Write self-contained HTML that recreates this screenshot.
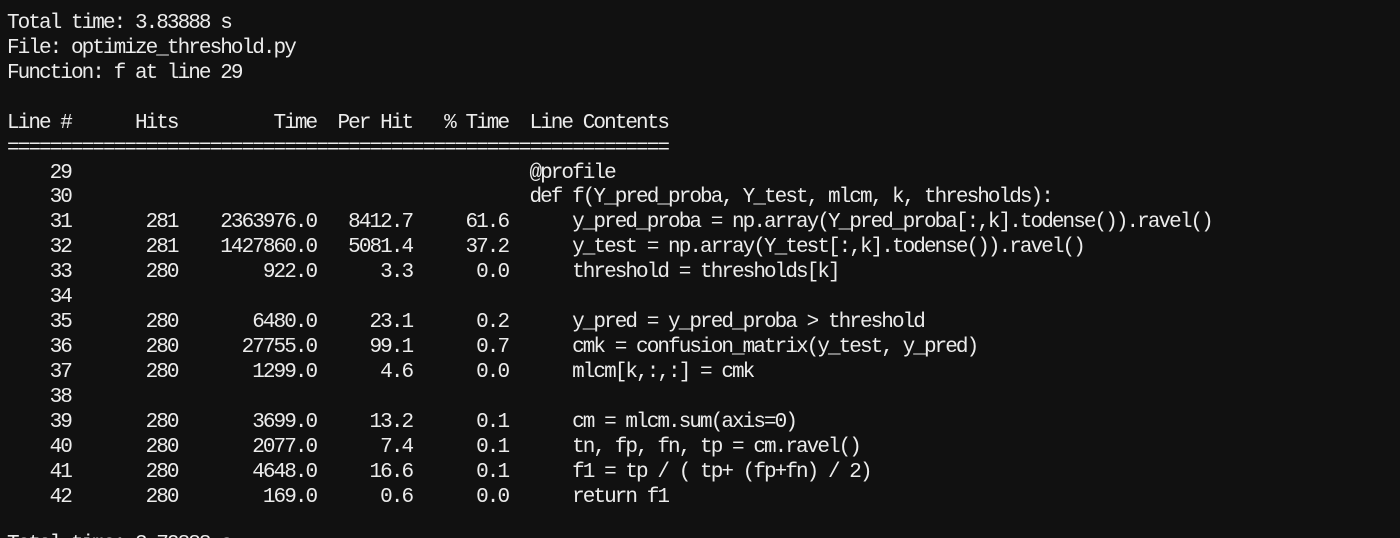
<!DOCTYPE html>
<html><head><meta charset="utf-8"><style>
html,body{margin:0;padding:0;background:#111111}
#wrap{position:relative;width:1400px;height:538px;overflow:hidden;background:#111111}
pre{margin:0;position:absolute;left:7px;top:12px;color:#ececec;font-family:"Liberation Mono","DejaVu Sans Mono",monospace;font-size:21px;letter-spacing:-1.94px;line-height:24.92px;white-space:pre}
pre.last{top:533px}
</style></head><body><div id="wrap"><pre>Total time: 3.83888 s
File: optimize_threshold.py
Function: f at line 29

Line #      Hits         Time  Per Hit   % Time  Line Contents
==============================================================
    29                                           @profile
    30                                           def f(Y_pred_proba, Y_test, mlcm, k, thresholds):
    31       281    2363976.0   8412.7     61.6      y_pred_proba = np.array(Y_pred_proba[:,k].todense()).ravel()
    32       281    1427860.0   5081.4     37.2      y_test = np.array(Y_test[:,k].todense()).ravel()
    33       280        922.0      3.3      0.0      threshold = thresholds[k]
    34
    35       280       6480.0     23.1      0.2      y_pred = y_pred_proba &gt; threshold
    36       280      27755.0     99.1      0.7      cmk = confusion_matrix(y_test, y_pred)
    37       280       1299.0      4.6      0.0      mlcm[k,:,:] = cmk
    38
    39       280       3699.0     13.2      0.1      cm = mlcm.sum(axis=0)
    40       280       2077.0      7.4      0.1      tn, fp, fn, tp = cm.ravel()
    41       280       4648.0     16.6      0.1      f1 = tp / ( tp+ (fp+fn) / 2)
    42       280        169.0      0.6      0.0      return f1</pre><pre class="last">Total time: 3.72888 s</pre></div></body></html>
